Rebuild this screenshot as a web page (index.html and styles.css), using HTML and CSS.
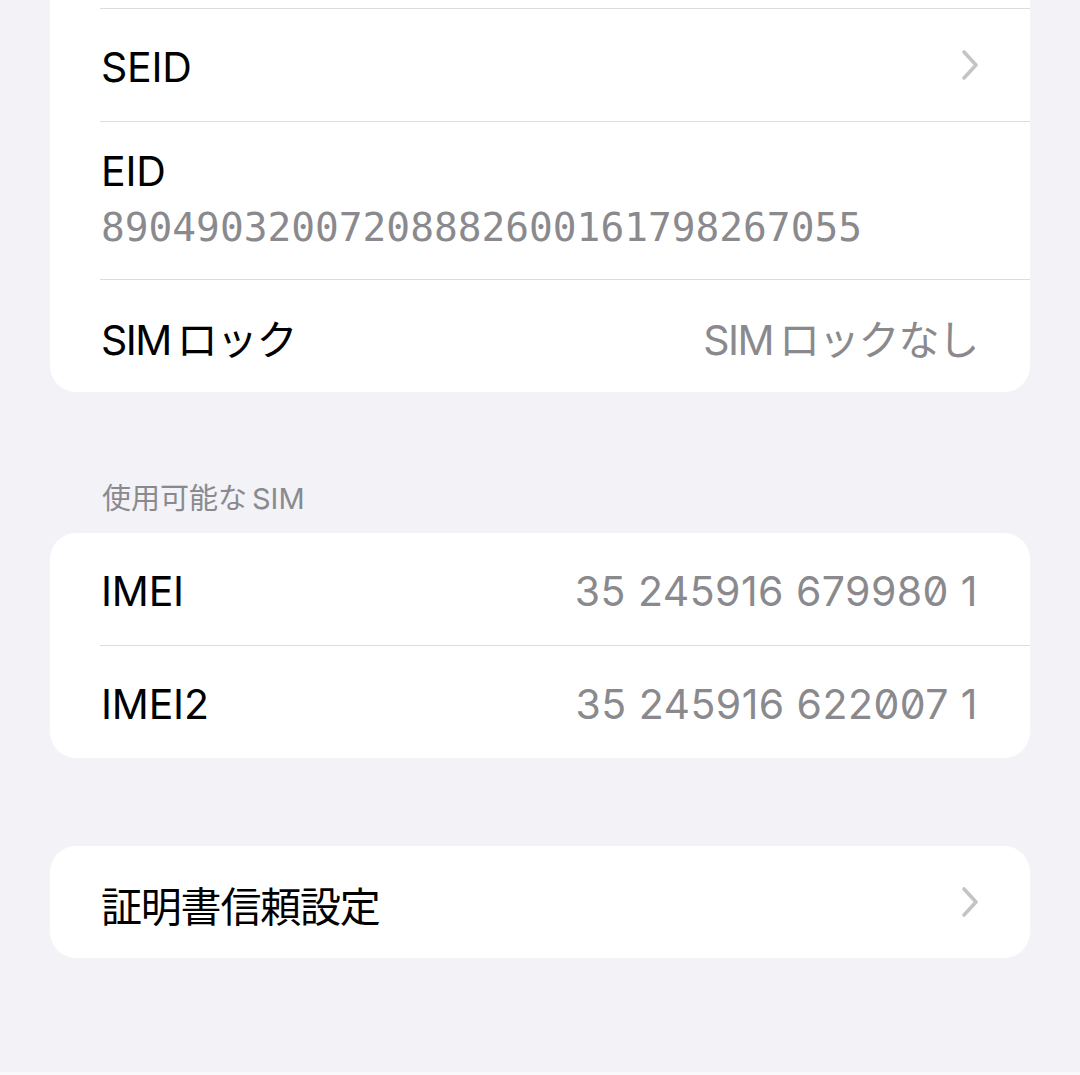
FILE: index.html
```html
<!DOCTYPE html>
<html lang="ja">
<head>
<meta charset="utf-8">
<title>SIM</title>
<link rel="stylesheet" href="styles.css">
</head>
<body>
<div class="page">
  <div class="card card-top">
    <div class="row stub"><div class="row-inner"></div></div>
    <div class="row"><div class="row-inner">
      <span class="label">SEID</span>
      <svg class="chev" viewBox="0 0 20 32" width="20" height="32"><path d="M4 3 L16 16 L4 29" fill="none" stroke="#c4c4c7" stroke-width="3.6" stroke-linecap="round" stroke-linejoin="round"/></svg>
    </div></div>
    <div class="row"><div class="row-inner stack">
      <span class="label lbl-line">EID</span>
      <span class="mono">89049032007208882600161798267055</span>
    </div></div>
    <div class="row last"><div class="row-inner">
      <span class="label"><span class="sim">SIM</span><span class="ja">ロック</span></span>
      <span class="value"><span class="sim">SIM</span><span class="ja">ロックなし</span></span>
    </div></div>
  </div>

  <div class="section-header">使用可能な<span class="lat">SIM</span></div>

  <div class="card">
    <div class="row"><div class="row-inner">
      <span class="label">IMEI</span>
      <span class="value num">35 245916 679980 1</span>
    </div></div>
    <div class="row last"><div class="row-inner">
      <span class="label">IMEI2</span>
      <span class="value num">35 245916 622007 1</span>
    </div></div>
  </div>

  <div class="card card-gap">
    <div class="row last"><div class="row-inner">
      <span class="label ja">証明書信頼設定</span>
      <svg class="chev" viewBox="0 0 20 32" width="20" height="32"><path d="M4 3 L16 16 L4 29" fill="none" stroke="#c4c4c7" stroke-width="3.6" stroke-linecap="round" stroke-linejoin="round"/></svg>
    </div></div>
  </div>
</div>
</body>
</html>
```

FILE: styles.css
```css
* { box-sizing: border-box; }
html, body {
  margin: 0;
  padding: 0;
  background: #f2f2f7;
}
body {
  font-family: Inter, "Noto Sans CJK JP", sans-serif;
  color: #000;
}
.page {
  height: 1075px;
  overflow: hidden;
  padding: 0 50px;
  border-bottom: 3px solid #f9f9fb;
}
.card {
  background: #fff;
  border-radius: 26px;
  overflow: hidden;
}
.card-top {
  border-top-left-radius: 0;
  border-top-right-radius: 0;
}
.card-gap { margin-top: 88px; }
.row {
  padding-left: 50px;
}
.row-inner {
  height: 113px;
  padding: 4px 52px 0 1px;
  border-bottom: 1px solid #dcdcdf;
  display: flex;
  align-items: center;
  justify-content: space-between;
}
.row.last .row-inner {
  border-bottom: none;
  height: 112px;
}
.row.stub .row-inner { height: 9px; padding: 0; }
.row-inner.stack {
  height: 158px;
  flex-direction: column;
  align-items: flex-start;
  justify-content: flex-start;
  padding-top: 24px;
}
.label {
  font-size: 41px;
  line-height: 50px;
  letter-spacing: -0.2px;
}
.sim { letter-spacing: -1.5px; }
.ja {
  font-family: "Noto Sans CJK JP", sans-serif;
  letter-spacing: -1.2px;
}
.label .ja, .value .ja { margin-left: 6px; }
.value {
  font-size: 41px;
  line-height: 50px;
  color: #8a8a8e;
}
.num {
  font-feature-settings: "zero" 1;
  letter-spacing: 0.45px;
}
.mono {
  font-family: "DejaVu Sans Mono", monospace;
  font-size: 39.5px;
  line-height: 50px;
  color: #8a8a8e;
  margin-top: 6px;
}
.chev {
  display: block;
  margin-right: -2px;
  margin-top: -4px;
}
.section-header {
  margin: 86px 0 16px 52px;
  font-family: "Noto Sans CJK JP", sans-serif;
  font-size: 29px;
  line-height: 36px;
  color: #8a8a8e;
}
.section-header .lat {
  font-family: Inter, sans-serif;
  margin-left: 5px;
}
```
